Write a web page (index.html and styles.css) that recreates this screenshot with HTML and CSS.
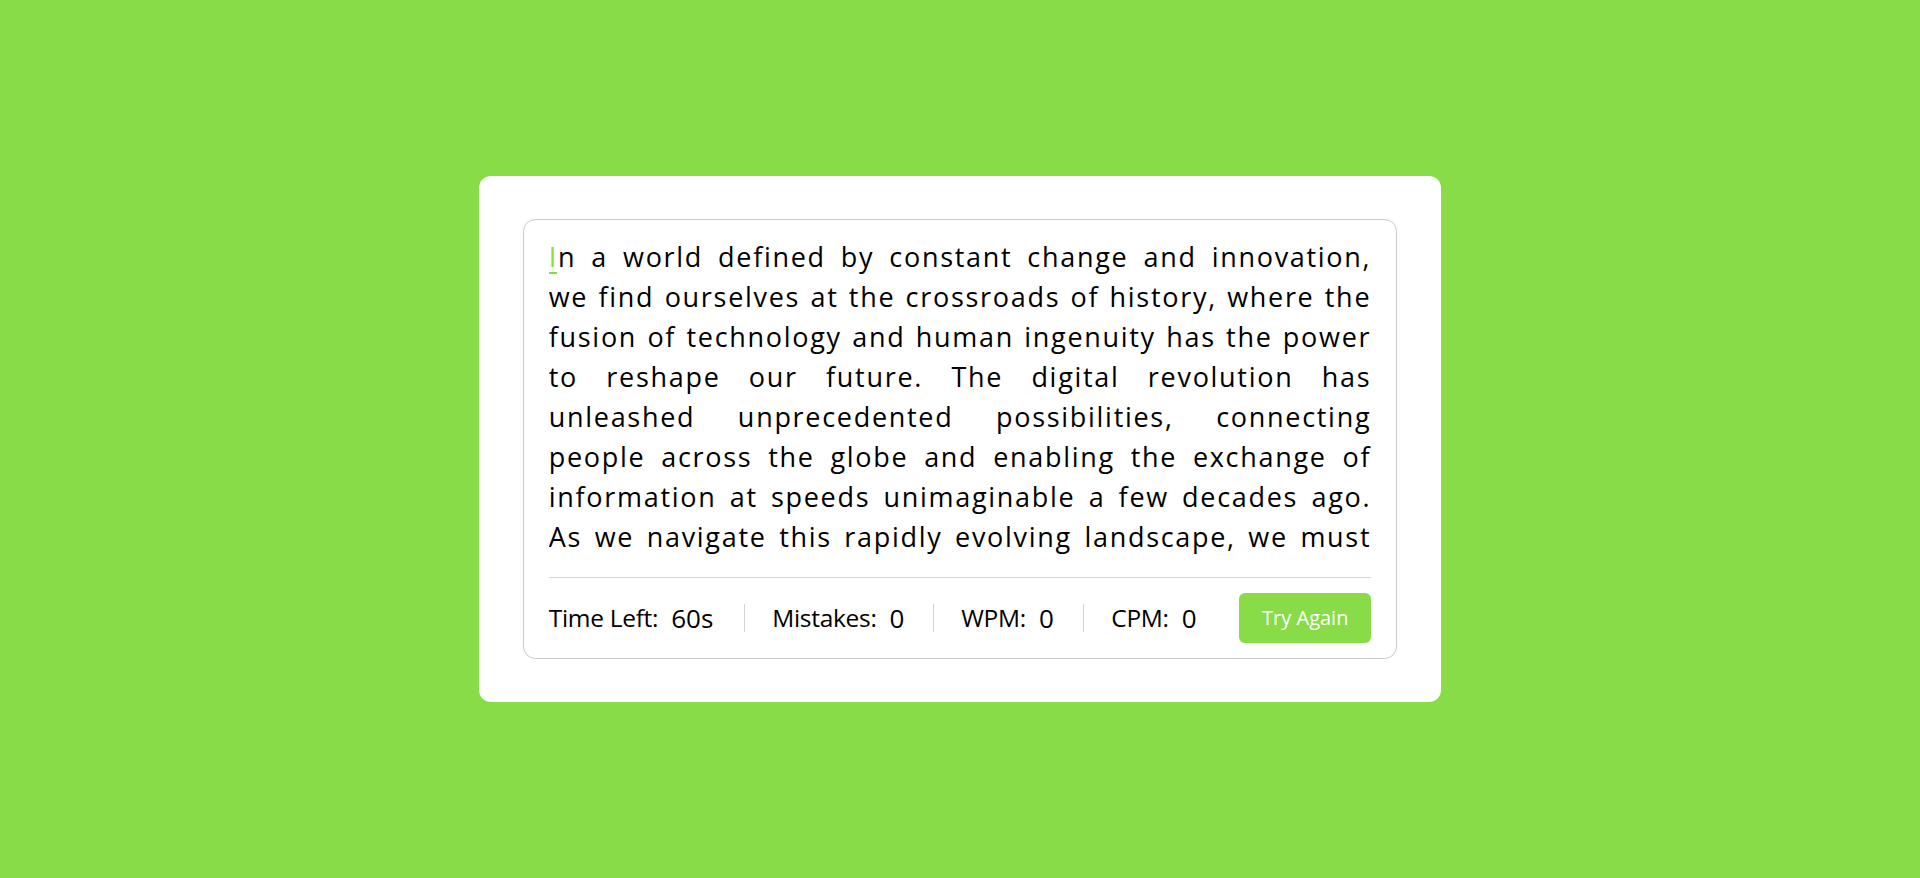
FILE: index.html
```html
<!DOCTYPE html>
<html lang="en">
<head>
<meta charset="utf-8">
<title>Typing Speed Test</title>
<link rel="stylesheet" href="styles.css">
</head>
<body>
<div class="wrapper">
  <div class="content-box">
    <div class="typing-text">
      <p class="line"><span class="active">I</span>n a world defined by constant change and innovation,</p>
      <p class="line">we find ourselves at the crossroads of history, where the</p>
      <p class="line">fusion of technology and human ingenuity has the power</p>
      <p class="line">to reshape our future. The digital revolution has</p>
      <p class="line">unleashed unprecedented possibilities, connecting</p>
      <p class="line">people across the globe and enabling the exchange of</p>
      <p class="line">information at speeds unimaginable a few decades ago.</p>
      <p class="line">As we navigate this rapidly evolving landscape, we must</p>
    </div>
    <div class="content">
      <ul class="result-details">
        <li class="stat stat-time"><span class="label">Time Left:</span><b class="value">60s</b></li>
        <li class="stat stat-mistake"><span class="label">Mistakes:</span><b class="value">0</b></li>
        <li class="stat stat-wpm"><span class="label">WPM:</span><b class="value">0</b></li>
        <li class="stat stat-cpm"><span class="label">CPM:</span><b class="value">0</b></li>
      </ul>
      <button class="try-btn">Try Again</button>
    </div>
  </div>
</div>
</body>
</html>
```
FILE: styles.css
```css
* {
  margin: 0;
  padding: 0;
  box-sizing: border-box;
}

html, body {
  height: 100%;
}

body {
  display: flex;
  align-items: center;
  justify-content: center;
  background: #87dc47;
  font-family: "Open Sans", "Noto Sans", sans-serif;
  color: #000;
}

.wrapper {
  width: 962px;
  padding: 43.75px;
  background: #fff;
  border-radius: 12px;
}

.content-box {
  border: 1.25px solid #c9c9c9;
  border-radius: 12.5px;
  padding: 16.25px 25px 0;
}

.typing-text {
  height: 320px;
  overflow: hidden;
}

.line {
  font-size: 27px;
  line-height: 40px;
  letter-spacing: 1.7px;
  text-align: justify;
  text-align-last: justify;
  white-space: nowrap;
}

.active {
  position: relative;
  color: #87dc47;
}

.active::after {
  content: "";
  position: absolute;
  left: 0;
  right: 1px;
  bottom: 1px;
  height: 2px;
  background: #87dc47;
}

.content {
  display: flex;
  align-items: center;
  justify-content: space-between;
  margin-top: 20px;
  padding: 15px 0;
  border-top: 1.25px solid #d4d4d4;
}

.result-details {
  list-style: none;
  display: grid;
  grid-template-columns: 195px 189px 150px 150px;
}

.stat {
  display: flex;
  align-items: center;
  height: 28px;
  padding: 0 27.5px;
  border-left: 1.25px solid #d4d4d4;
}

.stat-time {
  padding-left: 0;
  border-left: none;
}

.label {
  font-size: 24.5px;
  letter-spacing: -0.3px;
}

.value {
  font-size: 26px;
  font-weight: 500;
  margin-left: 13px;
}

.try-btn {
  width: 132px;
  height: 50px;
  border: none;
  border-radius: 6px;
  background: #87dc47;
  color: #fff;
  font-family: "Open Sans", "Noto Sans", sans-serif;
  font-size: 20px;
  cursor: pointer;
}
```
